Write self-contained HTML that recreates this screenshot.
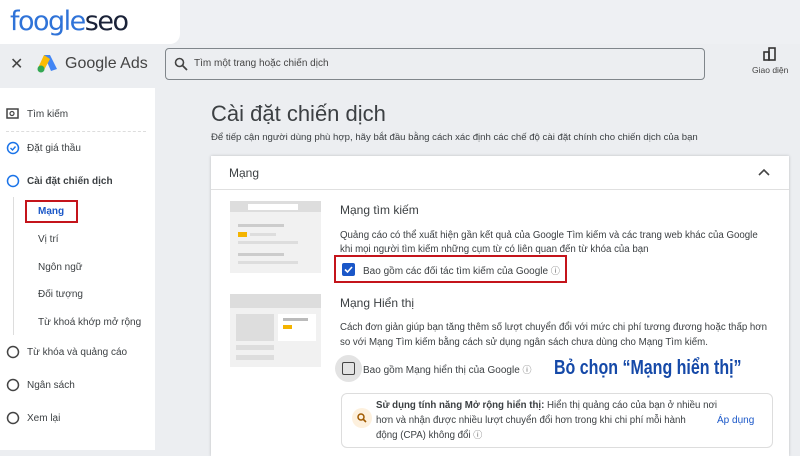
<!DOCTYPE html>
<html><head><meta charset="utf-8"><style>
*{margin:0;padding:0;box-sizing:border-box}
body{width:800px;height:450px;overflow:hidden;background:#eceef1;font-family:"Liberation Sans",sans-serif;color:#3c4043;position:relative}
.a{position:absolute}
.t{font-size:10px;white-space:nowrap}
</style></head><body>
<div class="a" style="left:0;top:0;width:180px;height:44px;background:#fff;border-bottom-right-radius:10px"></div>
<div class="a" style="left:10px;top:6px;font-size:27px;letter-spacing:-1.5px;font-family:'DejaVu Sans',sans-serif;line-height:32px"><span style="color:#2f73d8">foogle</span><span style="color:#1a2238">seo</span></div>
<div class="a" style="left:180px;top:0;width:620px;height:44px;background:#eef0f3"></div>
<div class="a" style="left:0;top:44px;width:800px;height:44px;background:#eceef1"></div>
<div class="a" style="left:10px;top:54px;font-size:16px;color:#444">✕</div>
<svg class="a" style="left:36px;top:53px" width="22" height="20" viewBox="0 0 22 20"><path d="M8 2 L14 2 L21 16 L15 18Z" fill="#4285f4"/><path d="M8 2 L14 6 L8 17 L2 15Z" fill="#fbbc04"/><circle cx="5" cy="16" r="3.5" fill="#34a853"/></svg>
<div class="a" style="left:65px;top:55px;font-size:16px;color:#444">Google Ads</div>
<div class="a" style="left:165px;top:48px;width:540px;height:32px;border:1px solid #80868b;border-radius:4px;background:#eceef1"></div>
<svg class="a" style="left:174px;top:57px" width="14" height="14" viewBox="0 0 14 14"><circle cx="5.5" cy="5.5" r="4" fill="none" stroke="#444" stroke-width="1.6"/><path d="M8.5 8.5L13 13" stroke="#444" stroke-width="1.8"/></svg>
<div class="a t" style="left:194px;top:58px;color:#444">Tìm một trang hoặc chiến dịch</div>
<svg class="a" style="left:763px;top:47px" width="14" height="14" viewBox="0 0 14 14"><rect x="1" y="5" width="5" height="8" fill="none" stroke="#333" stroke-width="1.6"/><rect x="6" y="1" width="6" height="12" fill="none" stroke="#333" stroke-width="1.6"/></svg>
<div class="a" style="left:752px;top:65px;font-size:8.5px;color:#444">Giao diện</div>
<div class="a" style="left:0;top:88px;width:155px;height:362px;background:#fff"></div>
<div class="a" style="left:6px;top:131px;width:140px;border-top:1px dashed #ddd"></div>
<svg class="a" style="left:6px;top:108px" width="14" height="12"><rect x="1" y="1" width="11" height="9" fill="none" stroke="#444" stroke-width="1.5"/><circle cx="6" cy="5.5" r="2" fill="none" stroke="#444" stroke-width="1.2"/></svg>
<div class="a t" style="left:27px;top:109px">Tìm kiếm</div>
<svg class="a" style="left:6px;top:141px" width="14" height="14"><circle cx="7" cy="7" r="5.5" fill="none" stroke="#1a73e8" stroke-width="1.5"/><path d="M4.5 7l2 2 3-3.5" fill="none" stroke="#1a73e8" stroke-width="1.4"/></svg>
<div class="a t" style="left:27px;top:143px">Đặt giá thầu</div>
<svg class="a" style="left:6px;top:174px" width="14" height="14"><circle cx="7" cy="7" r="5.5" fill="none" stroke="#1a73e8" stroke-width="1.5"/></svg>
<div class="a t" style="left:27px;top:176px;font-weight:bold">Cài đặt chiến dịch</div>
<div class="a" style="left:13px;top:197px;width:1px;height:138px;background:#ddd"></div>
<div class="a" style="left:25px;top:200px;width:53px;height:23px;border:2.5px solid #c4141b"></div>
<div class="a t" style="left:38px;top:206px;color:#1a57c8;font-weight:bold">Mạng</div>
<div class="a t" style="left:38px;top:234px">Vị trí</div>
<div class="a t" style="left:38px;top:262px">Ngôn ngữ</div>
<div class="a t" style="left:38px;top:289px">Đối tượng</div>
<div class="a t" style="left:38px;top:317px">Từ khoá khớp mở rộng</div>
<svg class="a" style="left:6px;top:345px" width="14" height="14"><circle cx="7" cy="7" r="5.5" fill="none" stroke="#444" stroke-width="1.5"/></svg>
<div class="a t" style="left:27px;top:347px">Từ khóa và quảng cáo</div>
<svg class="a" style="left:6px;top:378px" width="14" height="14"><circle cx="7" cy="7" r="5.5" fill="none" stroke="#444" stroke-width="1.5"/></svg>
<div class="a t" style="left:27px;top:380px">Ngân sách</div>
<svg class="a" style="left:6px;top:411px" width="14" height="14"><circle cx="7" cy="7" r="5.5" fill="none" stroke="#444" stroke-width="1.5"/></svg>
<div class="a t" style="left:27px;top:413px">Xem lại</div>
<div class="a" style="left:211px;top:101px;font-size:22px;color:#3c4043">Cài đặt chiến dịch</div>
<div class="a t" style="left:211px;top:132px;font-size:9.6px">Để tiếp cận người dùng phù hợp, hãy bắt đầu bằng cách xác định các chế độ cài đặt chính cho chiến dịch của bạn</div>
<div class="a" style="left:211px;top:156px;width:578px;height:300px;background:#fff;box-shadow:0 0 3px rgba(0,0,0,.2)"></div>
<div class="a" style="left:211px;top:189px;width:578px;height:1px;background:#e0e0e0"></div>
<div class="a" style="left:229px;top:166px;font-size:12px">Mạng</div>
<svg class="a" style="left:757px;top:167px" width="14" height="10"><path d="M2 8l5-5 5 5" fill="none" stroke="#444" stroke-width="1.6"/></svg>
<div class="a" style="left:230px;top:201px;width:91px;height:72px;background:#f1f1f1"></div>
<div class="a" style="left:230px;top:201px;width:91px;height:11px;background:#ddd"></div>
<div class="a" style="left:248px;top:204px;width:50px;height:6px;background:#fff"></div>
<div class="a" style="left:238px;top:224px;width:46px;height:3px;background:#ccc"></div>
<div class="a" style="left:238px;top:232px;width:9px;height:5px;background:#f4b400"></div>
<div class="a" style="left:250px;top:233px;width:26px;height:3px;background:#ddd"></div>
<div class="a" style="left:238px;top:241px;width:60px;height:3px;background:#ddd"></div>
<div class="a" style="left:238px;top:253px;width:46px;height:3px;background:#ccc"></div>
<div class="a" style="left:238px;top:261px;width:60px;height:3px;background:#ddd"></div>
<div class="a" style="left:230px;top:294px;width:91px;height:73px;background:#f1f1f1"></div>
<div class="a" style="left:230px;top:294px;width:91px;height:14px;background:#ddd"></div>
<div class="a" style="left:236px;top:314px;width:38px;height:27px;background:#ddd"></div>
<div class="a" style="left:278px;top:314px;width:38px;height:27px;background:#fff"></div>
<div class="a" style="left:283px;top:318px;width:25px;height:3px;background:#bbb"></div>
<div class="a" style="left:283px;top:325px;width:9px;height:4px;background:#f4b400"></div>
<div class="a" style="left:236px;top:345px;width:38px;height:5px;background:#ddd"></div>
<div class="a" style="left:236px;top:355px;width:38px;height:5px;background:#ddd"></div>
<div class="a" style="left:340px;top:203px;font-size:12px">Mạng tìm kiếm</div>
<div class="a t" style="left:340px;top:229px;font-size:9.7px;line-height:13.5px">Quảng cáo có thể xuất hiện gần kết quả của Google Tìm kiếm và các trang web khác của Google<br>khi mọi người tìm kiếm những cụm từ có liên quan đến từ khóa của bạn</div>
<div class="a" style="left:334px;top:255px;width:233px;height:28px;border:2.5px solid #c4141b"></div>
<div class="a" style="left:342px;top:263px;width:13px;height:13px;background:#1a57c8;border-radius:2px"></div>
<svg class="a" style="left:342px;top:263px" width="13" height="13"><path d="M3 6.5l2.5 2.5 4.5-5" fill="none" stroke="#fff" stroke-width="1.6"/></svg>
<div class="a t" style="left:363px;top:264px">Bao gồm các đối tác tìm kiếm của Google <span style="font-size:9px;color:#666">ⓘ</span></div>
<div class="a" style="left:340px;top:296px;font-size:12px">Mạng Hiển thị</div>
<div class="a t" style="left:340px;top:321px;font-size:9.7px;line-height:14.5px">Cách đơn giản giúp bạn tăng thêm số lượt chuyển đổi với mức chi phí tương đương hoặc thấp hơn<br>so với Mạng Tìm kiếm bằng cách sử dụng ngân sách chưa dùng cho Mạng Tìm kiếm.</div>
<div class="a" style="left:335px;top:355px;width:27px;height:27px;border-radius:50%;background:#e3e3e3"></div>
<div class="a" style="left:342px;top:362px;width:13px;height:13px;border:1.8px solid #444;border-radius:2px"></div>
<div class="a t" style="left:363px;top:363px">Bao gồm Mạng hiển thị của Google <span style="font-size:9px;color:#666">ⓘ</span></div>
<div class="a" style="left:554px;top:357px;font-size:20px;font-weight:bold;color:#1549a8;transform:scaleX(.8);transform-origin:left;font-family:'Liberation Sans Narrow','Liberation Sans',sans-serif">Bỏ chọn “Mạng hiển thị”</div>
<div class="a" style="left:341px;top:393px;width:432px;height:55px;border:1px solid #ddd;border-radius:6px"></div>
<div class="a" style="left:352px;top:408px;width:20px;height:20px;border-radius:50%;background:#fdf0dd"></div>
<svg class="a" style="left:356px;top:412px" width="12" height="12"><circle cx="5" cy="5" r="3" fill="none" stroke="#a05a00" stroke-width="1.5"/><path d="M7 7l3 3" stroke="#a05a00" stroke-width="1.6"/></svg>
<div class="a t" style="left:376px;top:398px;font-size:9.7px;line-height:15px"><b>Sử dụng tính năng Mở rộng hiển thị:</b> Hiển thị quảng cáo của bạn ở nhiều nơi<br>hơn và nhận được nhiều lượt chuyển đổi hơn trong khi chi phí mỗi hành<br>động (CPA) không đổi <span style="font-size:9px;color:#666">ⓘ</span></div>
<div class="a t" style="left:717px;top:415px;color:#1a57c8">Áp dụng</div>
</body></html>
